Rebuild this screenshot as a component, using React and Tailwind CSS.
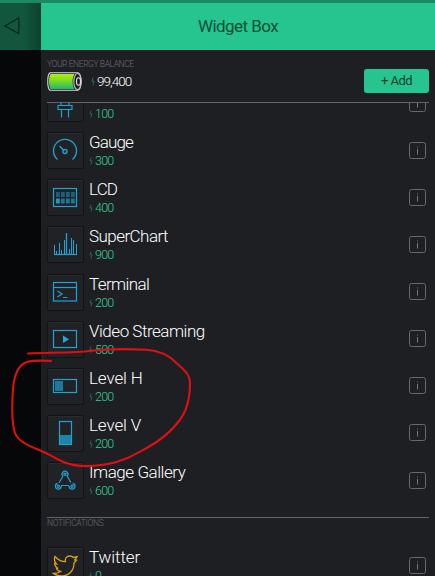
import React from 'react';

const BLUE = '#22a2d0';

function ServoIcon() {
  return (
    <g>
      <path d="M11 20.500h14v4H11zM14.500 24.500v8M21.500 24.500v8M14 20v-5h8v5" />
    </g>
  );
}

function GaugeIcon() {
  return (
    <g>
      <path d="M10.500 27.500A11.500 11.500 0 1 1 25.500 27.500" strokeWidth="1.300" />
      <circle cx="18" cy="19.500" r="2" strokeWidth="1.400" />
      <path d="M16.500 18L12.500 14" strokeWidth="1.500" />
    </g>
  );
}

function LcdIcon() {
  return (
    <g>
      <rect x="6.500" y="9.500" width="23" height="18" />
      {[9, 14, 19, 24].map((x) => (
        <g key={x} stroke="none">
          <rect x={x} y="13" width="3.800" height="5" fill="#1b5f7c" />
          <rect x={x} y="19.500" width="3.800" height="5" fill={x === 9 ? '#2794ba' : '#1f7496'} />
        </g>
      ))}
    </g>
  );
}

function ChartIcon() {
  return (
    <g>
      <path d="M7 28.500h23" strokeWidth="1.200" />
      <path d="M7.500 28v-9M9.500 28v-3M12.500 28v-11M14.500 28v-4M17.500 28v-14M22.500 28v-5M24.500 28v-16M26.500 28v-14M29.500 28v-10" strokeWidth="1" />
      <path d="M19.500 28V7" strokeWidth="1.300" />
    </g>
  );
}

function TerminalIcon() {
  return (
    <g>
      <rect x="6.500" y="8.500" width="23" height="18.500" />
      <path d="M6.500 13.500h23" />
      <path d="M10.500 17l4.500 3-4.500 3M16 23.500h4.500" />
    </g>
  );
}

function VideoIcon() {
  return (
    <g>
      <rect x="6.500" y="9.500" width="23" height="17" />
      <path d="M16 14.500v7.500l6-3.700z" fill="#20a8d8" stroke="none" />
    </g>
  );
}

function LevelHIcon() {
  return (
    <g>
      <rect x="6.500" y="11.500" width="23" height="13" />
      <rect x="8" y="13" width="8" height="10" fill="#1c789e" stroke="none" />
    </g>
  );
}

function LevelVIcon() {
  return (
    <g>
      <rect x="12.500" y="6.500" width="12" height="23" />
      <rect x="13" y="20" width="11" height="9" fill="#1c83ab" stroke="none" />
    </g>
  );
}

function GalleryIcon() {
  return (
    <g strokeWidth="1.200">
      <circle cx="18" cy="12.300" r="1.100" />
      <circle cx="11.300" cy="24.200" r="1.100" />
      <circle cx="25" cy="24.200" r="1.100" />
      <path d="M16 14.200a2.900 2.900 0 1 1 4.200-.2l3.600 6.500M16 14.200l-4 6.500M14 23.500h8M14.200 24a2.900 2.900 0 1 1-3.700-2.600M22.200 24a2.900 2.900 0 1 0 3.500-2.600" />
    </g>
  );
}

function TwitterIcon() {
  return (
    <path
      d="M8 9.500c3 3.500 6.500 5.200 10.500 5.200-.8-3.200 1.200-5.700 4.200-5.700 1.500 0 2.700.5 3.700 1.500l3.600-.8-2.200 3.300 1.700.2-2.500 2.800c0 7.500-5 13-12 13-3.300 0-6.200-.9-8.500-2.500 3 .1 5.200-.6 7-2-2-.2-3.400-1.300-4-3.200h1.700c-2.200-.8-3.500-2.500-3.600-4.800l1.800.4c-1.900-1.900-2.400-4.700-1.400-7.400z"
      stroke="#dda021"
      strokeWidth="1.300"
    />
  );
}

function Bolt({ className }) {
  return (
    <svg viewBox="0 0 4 9" className={className} fill="none" stroke="#278d6c" strokeWidth="0.700">
      <path d="M2.200 .500L.8 4.300h2.400L1.800 8.500" />
    </svg>
  );
}

function InfoButton() {
  return (
    <button className="mr-[9px] mt-[9.500px] flex h-[17px] w-[17px] shrink-0 items-center justify-center rounded-[2.500px] border border-[#68696c]">
      <svg viewBox="0 0 3 9" className="h-[9px] w-[3px]" stroke="#77787a">
        <path d="M1.500 .500v1M1.500 3v5.500" />
      </svg>
    </button>
  );
}

function WidgetRow({ name, price, icon: Icon, tracking }) {
  return (
    <div className="flex h-[47.130px] shrink-0 items-start">
      <div className="h-[37px] w-[37px] shrink-0 rounded-[2px] border border-[#121317] bg-[#202226] shadow-[inset_0_1px_0_#292b2f]">
        <svg viewBox="0 0 36 36" className="-ml-px -mt-px h-[36px] w-[36px]" fill="none" stroke={BLUE} strokeWidth="1.200">
          <Icon />
        </svg>
      </div>
      <div className="-mt-px ml-[5px] flex-1">
        <div className={`h-[22px] whitespace-nowrap text-[17px] leading-[22px] text-[#ffffff] ${tracking}`}>{name}</div>
        <div className="mt-px flex h-[14px] items-center">
          <Bolt className="mr-[2px] h-[8px] w-[4px]" />
          <span className="text-[12.500px] font-light leading-[14px] tracking-[-0.750px] text-[#34cf95]">{price}</span>
        </div>
      </div>
      <InfoButton />
    </div>
  );
}

const widgets = [
  { id: 'servo', name: '', price: '100', icon: ServoIcon, tracking: '' },
  { id: 'gauge', name: 'Gauge', price: '300', icon: GaugeIcon, tracking: 'tracking-[-0.850px]' },
  { id: 'lcd', name: 'LCD', price: '400', icon: LcdIcon, tracking: 'tracking-[-0.800px]' },
  { id: 'chart', name: 'SuperChart', price: '900', icon: ChartIcon, tracking: 'tracking-[-0.550px]' },
  { id: 'terminal', name: 'Terminal', price: '200', icon: TerminalIcon, tracking: 'tracking-[-0.600px]' },
  { id: 'video', name: 'Video Streaming', price: '500', icon: VideoIcon, tracking: 'tracking-[-0.480px]' },
  { id: 'level-h', name: 'Level H', price: '200', icon: LevelHIcon, tracking: 'tracking-[-0.100px]' },
  { id: 'level-v', name: 'Level V', price: '200', icon: LevelVIcon, tracking: 'tracking-[-0.100px]' },
  { id: 'gallery', name: 'Image Gallery', price: '600', icon: GalleryIcon, tracking: 'tracking-[-0.450px]' },
];

function Battery() {
  return (
    <svg viewBox="0 0 36 19" className="h-[19px] w-[36px]" fill="none">
      <defs>
        <linearGradient id="charge" x1="0" y1="0" x2="0" y2="1">
          <stop offset="0" stopColor="#b3ed10" />
          <stop offset="0.450" stopColor="#7bdc20" />
          <stop offset="1" stopColor="#20b873" />
        </linearGradient>
      </defs>
      <path d="M3 .800h28c4 1 4 16.400 0 17.400H3c-3-2-3-15.400 0-17.400z" stroke="#d8dedb" strokeWidth="1.100" />
      <path d="M3.500 2h24c-2.500 4-2.500 11 0 15h-24c-2-3-2-12 0-15z" fill="url(#charge)" />
      <ellipse cx="30.500" cy="9.500" rx="3.700" ry="8" stroke="#b9bfbd" strokeWidth="1.100" />
      <ellipse cx="31.500" cy="9.500" rx="2" ry="3.800" stroke="#e3e5e4" strokeWidth="1.100" />
    </svg>
  );
}

export default function App() {
  return (
    <div className="relative flex h-[576px] w-[435px] flex-col overflow-hidden bg-[#1e1f23] font-['Roboto','Open_Sans',sans-serif] font-light">
      <div className="h-[3px] shrink-0 bg-[#1c8963]" />
      <div className="flex min-h-0 flex-1">
        <aside className="w-[41px] shrink-0 bg-[#060709]">
          <div className="h-[47px] bg-linear-to-r from-[#12563d] from-60% to-[#0d402d] pl-[4px] pt-[14px]">
            <svg viewBox="0 0 16 18" className="h-[18px] w-[16px]" fill="none" stroke="#05271b" strokeWidth="1.200">
              <path d="M14.800 1v15.500L.8 9z" />
            </svg>
          </div>
        </aside>
        <main className="flex min-w-0 flex-1 flex-col">
          <header className="flex h-[47px] shrink-0 items-center justify-center bg-[#26c590]">
            <h1 className="-mt-[2px] text-[17px] font-normal leading-[20px] tracking-[-0.550px] text-[#0b4f38]">Widget Box</h1>
          </header>
          <section className="ml-[6px] mr-[6px] flex h-[53px] shrink-0 justify-between border-b border-[#636467] bg-[#1e1f23]">
            <div className="pt-[9px]">
              <div className="h-[11px] whitespace-nowrap text-[8.500px] leading-[11px] tracking-[-0.420px] text-[#6a6b6f]">YOUR ENERGY BALANCE</div>
              <div className="mt-[1px] flex h-[20px] items-center">
                <Battery />
                <Bolt className="ml-[8px] mr-[2px] h-[9px] w-[4px]" />
                <span className="text-[13.500px] font-light leading-[20px] tracking-[-0.950px] text-[#ffffff]">99,400</span>
              </div>
            </div>
            <button className="mt-[19px] h-[24px] w-[65px] rounded-[3px] bg-[#26c590] text-[13px] font-normal leading-[24px] tracking-[-0.500px] text-[#0b3f2d]">+ Add</button>
          </section>
          <section className="min-h-0 flex-1 overflow-hidden pl-[6px]">
            <div className="-mt-[18px] mr-0 flex h-[431px] flex-col">
              {widgets.map((w) => (
                <WidgetRow key={w.id} {...w} />
              ))}
            </div>
            <div className="mr-[6px] mt-px h-[30px] border-t border-[#636467]">
              <div className="text-[8.500px] leading-[11px] tracking-[-0.320px] text-[#6a6b6f]">NOTIFICATIONS</div>
            </div>
            <WidgetRow name="Twitter" price="0" icon={TwitterIcon} tracking="tracking-[-0.100px]" />
          </section>
        </main>
      </div>
      <svg viewBox="0 0 200 130" className="pointer-events-none absolute left-0 top-[340px] h-[130px] w-[200px]" fill="none" stroke="#dc1015" strokeWidth="2.100" strokeLinecap="round" strokeLinejoin="round">
        <path d="M28 13.500C50 12.500 75 13 92 10.800C110 8.500 130 9 146 9.800C159 10.500 169 15 177 23.500C184 30 190 34 190 43C190 58 187 71 179 81C170 93 160 101 145 109C134 115 124 121 108 124C92 127 74 127 61 121C53 117 47 113 39 110C27 105 18 101 15 93C11 82 12 64 13 49C14 37 17 25 27 22C34 20 43 20.500 51 21" />
      </svg>
    </div>
  );
}
